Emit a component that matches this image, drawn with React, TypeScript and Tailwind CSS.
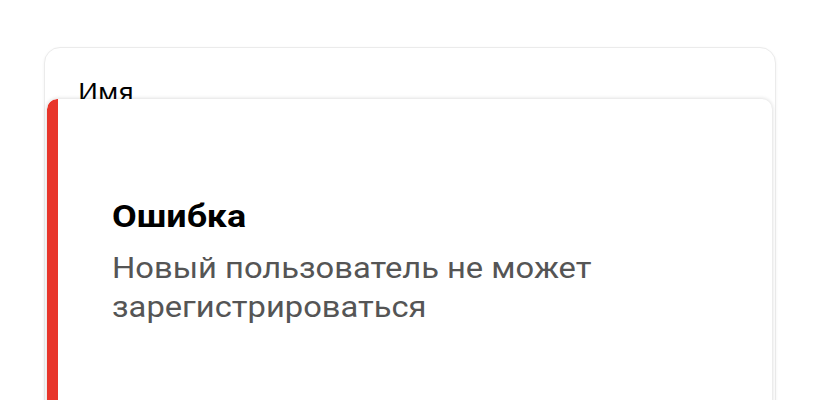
import React from "react";

export default function App() {
  return (
    <div className="relative w-[820px] h-[400px] overflow-hidden bg-white" style={{ fontFamily: "Roboto, 'Noto Sans', sans-serif" }}>
      <div className="pt-[47px] px-[44px]">
        <div className="rounded-[16px] border border-[#ebebeb] bg-white shadow-[0_1px_3px_rgba(0,0,0,0.06)] px-[33px] pt-[28px] pb-[40px] h-[420px]">
          <div className="text-[25px] leading-[30px] text-black origin-left scale-x-[1.06]" style={{ fontFamily: "'Noto Sans', sans-serif" }}>Имя</div>
          <div className="mt-[14px] h-[48px] rounded-[10px] border border-[#e6e6e6]" />
          <div className="mt-[60px] h-[48px] rounded-[10px] border border-[#e6e6e6]" />
          <div className="mt-[60px] h-[48px] rounded-[10px] border border-[#e6e6e6]" />
        </div>
      </div>
      <div className="absolute left-[47px] top-[99px] w-[725px] h-[340px] flex rounded-[10px] bg-white shadow-[0_0_4px_rgba(0,0,0,0.18)] overflow-hidden">
        <div className="w-[11px] bg-[#e8352a] rounded-tl-[10px]" />
        <div className="pl-[54px] pt-[99px] flex flex-col">
          <div className="text-[32px] leading-[36px] font-bold text-black origin-left scale-x-[1.12]">Ошибка</div>
          <div className="mt-[14px] text-[30px] leading-[39px] text-[#555555] whitespace-nowrap origin-left scale-x-[1.09]">
            Новый пользователь не может
            <br />
            зарегистрироваться
          </div>
        </div>
      </div>
    </div>
  );
}
